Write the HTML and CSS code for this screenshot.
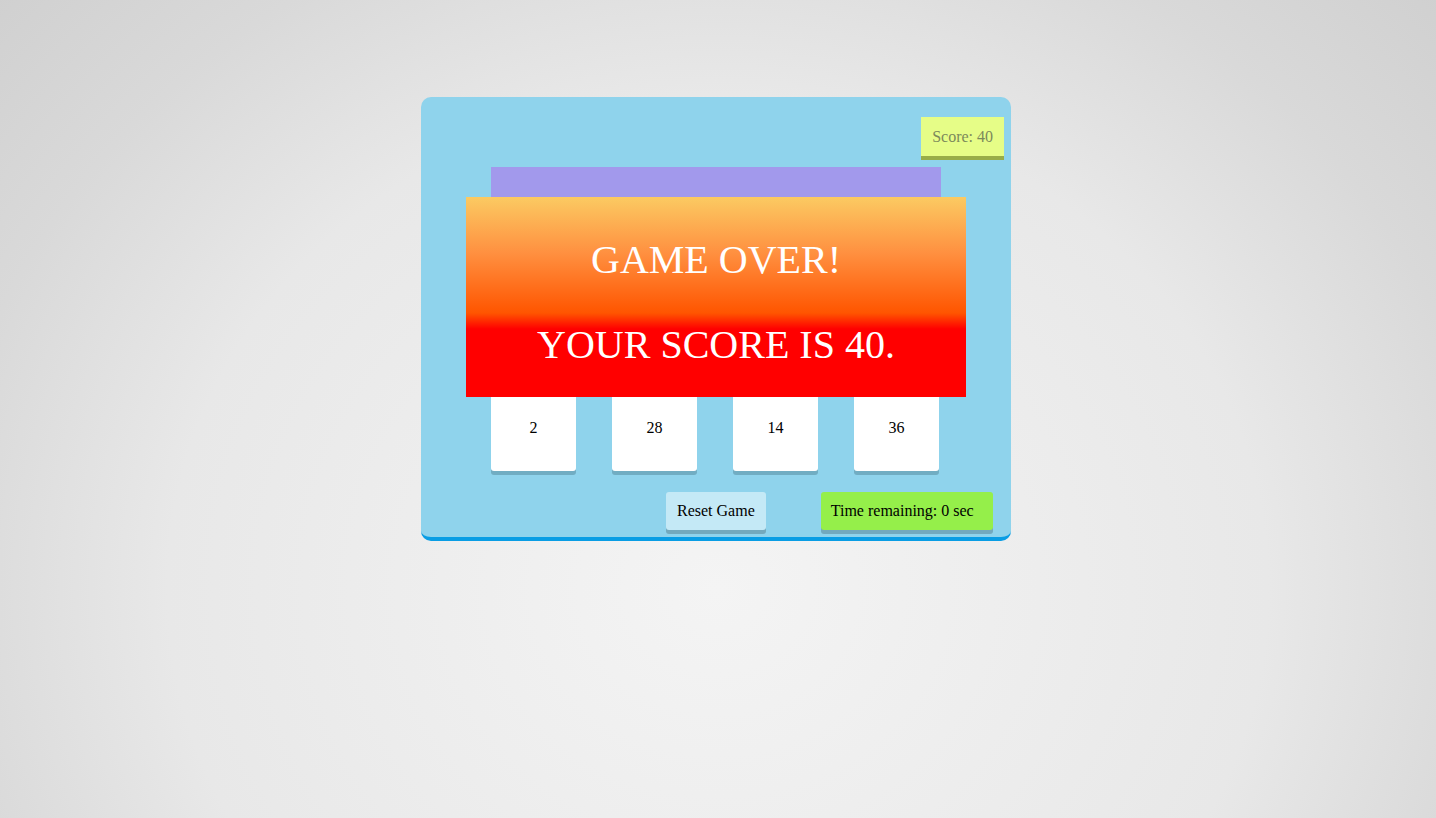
FILE: index.html
```html
<!DOCTYPE html>
<html>
<head>
<meta charset="utf-8">
<link rel="stylesheet" href="styles.css">
</head>
<body>
<div class="game">
  <div class="topbar">
    <div class="score">Score: 40</div>
  </div>
  <div class="target"></div>
  <div class="cards">
    <div class="card">2</div>
    <div class="card">28</div>
    <div class="card">14</div>
    <div class="card">36</div>
  </div>
  <div class="controls">
    <div class="btn reset">Reset Game</div>
    <div class="btn timer">Time remaining: 0 sec</div>
  </div>
  <div class="overlay">
    <div class="line">GAME OVER!</div>
    <div class="line">YOUR SCORE IS 40.</div>
  </div>
</div>
</body>
</html>
```

FILE: styles.css
```css
html, body {
  margin: 0;
  height: 100%;
}
body {
  font-family: "Liberation Serif", "Times New Roman", serif;
  font-size: 16px;
  background: radial-gradient(ellipse 1000px 900px at 50% 72%, #f4f4f4 0%, #e8e8e8 55%, #d9d9d9 78%, #cfcfcf 100%);
  overflow: hidden;
}
.game {
  position: relative;
  box-sizing: border-box;
  width: 590px;
  margin: 97px 0 0 421px;
  padding: 20px 0 7px;
  background: #8fd3ec;
  border-radius: 10px;
  border-bottom: 4px solid #099de4;
}
.topbar {
  display: flex;
  justify-content: flex-end;
  padding-right: 7px;
}
.score {
  padding: 10px 11px;
  line-height: 19px;
  background: #e6fd87;
  color: #7c8a5b;
  border-bottom: 4px solid #98ad48;
}
.target {
  width: 450px;
  height: 80px;
  margin: 7px 0 0 70px;
  background: #a299ec;
}
.cards {
  display: flex;
  gap: 36px;
  margin: 138px 0 0 70px;
}
.card {
  width: 85px;
  height: 86px;
  display: flex;
  align-items: center;
  justify-content: center;
  background: #fff;
  border-radius: 3px;
  box-shadow: 0 4px 0 #71adc3;
}
.controls {
  display: flex;
  margin: 21px 0 0 245px;
  gap: 55px;
}
.btn {
  height: 38px;
  line-height: 38px;
  border-radius: 3px;
  color: #000;
}
.reset {
  padding: 0 11px;
  background: #c4e9f6;
  box-shadow: 0 4px 0 #73a9bd;
}
.timer {
  width: 172px;
  box-sizing: border-box;
  padding-left: 10px;
  background: #95ef4a;
  box-shadow: 0 4px 0 #72a9be;
}
.overlay {
  position: absolute;
  left: 45px;
  top: 100px;
  width: 500px;
  height: 200px;
  box-sizing: border-box;
  padding-top: 40px;
  display: flex;
  flex-direction: column;
  align-items: center;
  gap: 39px;
  background: linear-gradient(to bottom, #fbca62 0%, #ff9040 28%, #ff5500 58%, #ff0000 66%, #ff0000 100%);
  color: #fff;
}
.line {
  font-size: 40px;
  line-height: 46px;
}
```
